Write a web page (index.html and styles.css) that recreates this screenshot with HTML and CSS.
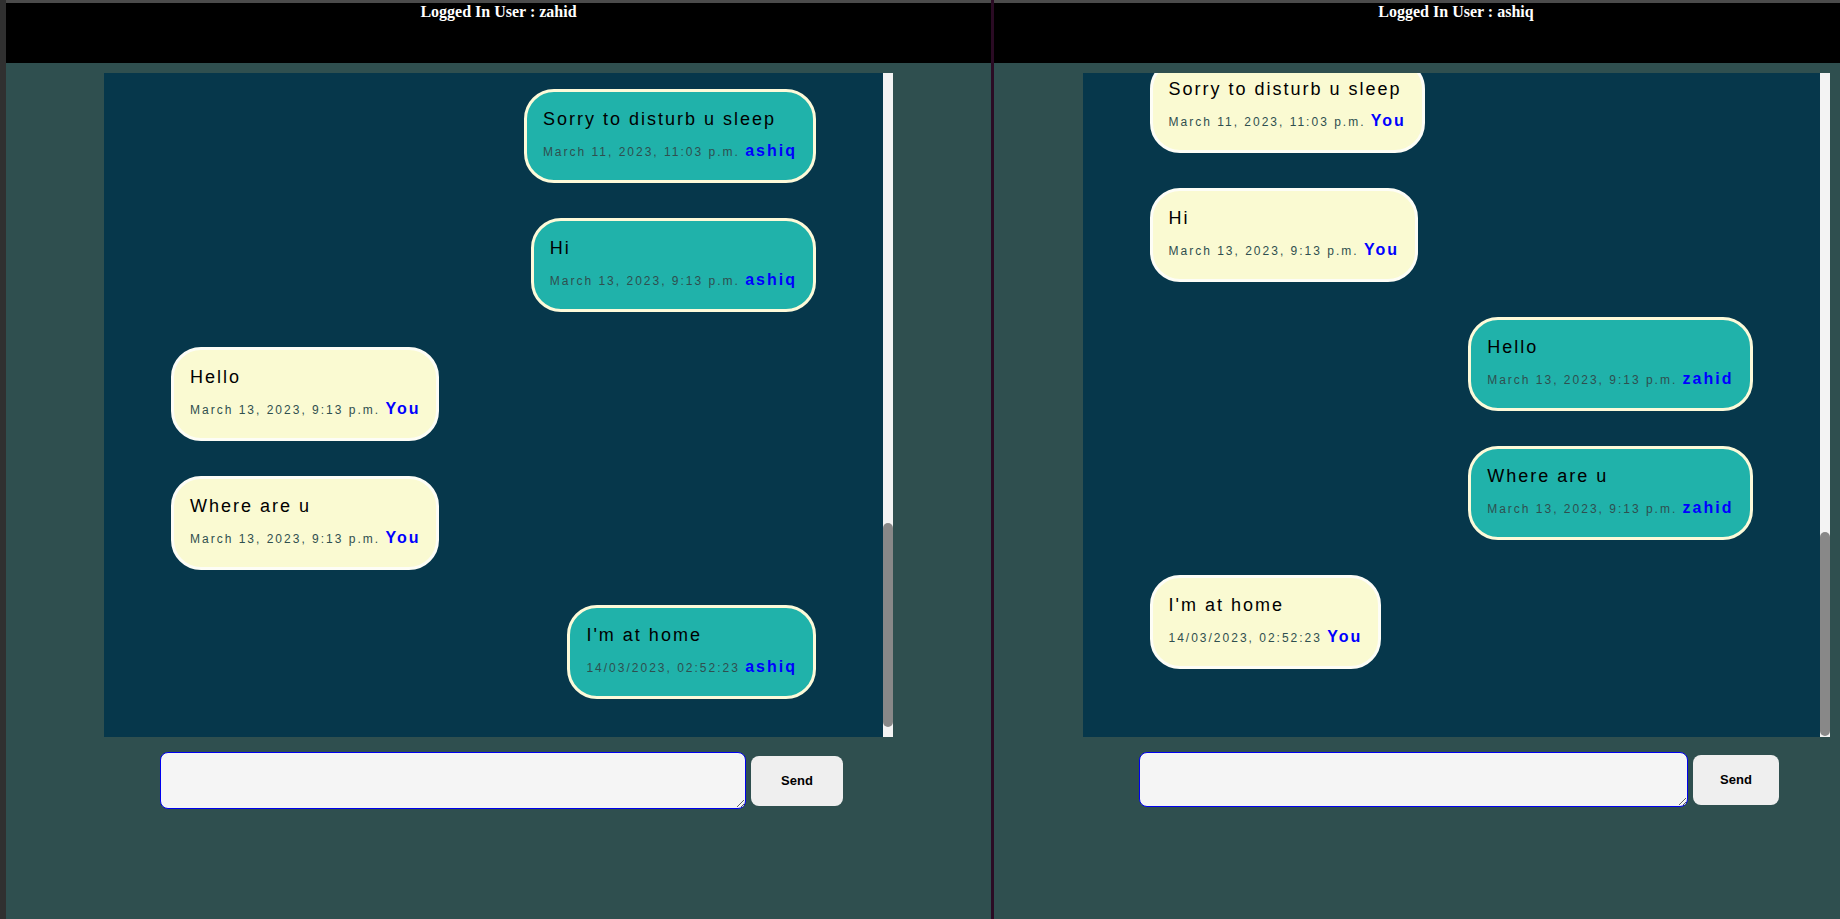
FILE: index.html
```html
<!DOCTYPE html>
<html lang="en">
<head>
<meta charset="utf-8">
<title>Chat</title>
<link rel="stylesheet" href="styles.css">
</head>
<body>
<div class="screen">
  <div class="edge"></div>

  <section class="pane pane--zahid">
    <header class="topbar"><h4 class="topbar__title">Logged In User : zahid</h4></header>
    <div class="chat">
      <div class="chat__scroll" data-offset="32">
        <div class="thread">
          <div class="msg msg--end"><div class="bubble bubble--teal"><p class="bubble__text">Sorry to disturb u sleep</p><div class="bubble__meta"><span class="bubble__date">March 11, 2023, 11:03 p.m.</span> <span class="bubble__user">ashiq</span></div></div></div>
          <div class="msg msg--end"><div class="bubble bubble--teal"><p class="bubble__text">Hi</p><div class="bubble__meta"><span class="bubble__date">March 13, 2023, 9:13 p.m.</span> <span class="bubble__user">ashiq</span></div></div></div>
          <div class="msg msg--start"><div class="bubble bubble--cream"><p class="bubble__text">Hello</p><div class="bubble__meta"><span class="bubble__date">March 13, 2023, 9:13 p.m.</span> <span class="bubble__user">You</span></div></div></div>
          <div class="msg msg--start"><div class="bubble bubble--cream"><p class="bubble__text">Where are u</p><div class="bubble__meta"><span class="bubble__date">March 13, 2023, 9:13 p.m.</span> <span class="bubble__user">You</span></div></div></div>
          <div class="msg msg--end"><div class="bubble bubble--teal"><p class="bubble__text">I'm at home</p><div class="bubble__meta"><span class="bubble__date">14/03/2023, 02:52:23</span> <span class="bubble__user">ashiq</span></div></div></div>
        </div>
      </div>
      <div class="chat__bar"><div class="chat__thumb"></div></div>
    </div>
    <form class="composer">
      <textarea class="composer__input"></textarea>
      <button type="button" class="composer__send">Send</button>
    </form>
  </section>

  <div class="divider"></div>

  <section class="pane pane--ashiq">
    <header class="topbar"><h4 class="topbar__title">Logged In User : ashiq</h4></header>
    <div class="chat">
      <div class="chat__scroll" data-offset="2">
        <div class="thread">
          <div class="msg msg--start"><div class="bubble bubble--cream"><p class="bubble__text">Sorry to disturb u sleep</p><div class="bubble__meta"><span class="bubble__date">March 11, 2023, 11:03 p.m.</span> <span class="bubble__user">You</span></div></div></div>
          <div class="msg msg--start"><div class="bubble bubble--cream"><p class="bubble__text">Hi</p><div class="bubble__meta"><span class="bubble__date">March 13, 2023, 9:13 p.m.</span> <span class="bubble__user">You</span></div></div></div>
          <div class="msg msg--end"><div class="bubble bubble--teal"><p class="bubble__text">Hello</p><div class="bubble__meta"><span class="bubble__date">March 13, 2023, 9:13 p.m.</span> <span class="bubble__user">zahid</span></div></div></div>
          <div class="msg msg--end"><div class="bubble bubble--teal"><p class="bubble__text">Where are u</p><div class="bubble__meta"><span class="bubble__date">March 13, 2023, 9:13 p.m.</span> <span class="bubble__user">zahid</span></div></div></div>
          <div class="msg msg--start"><div class="bubble bubble--cream"><p class="bubble__text">I'm at home</p><div class="bubble__meta"><span class="bubble__date">14/03/2023, 02:52:23</span> <span class="bubble__user">You</span></div></div></div>
        </div>
      </div>
      <div class="chat__bar"><div class="chat__thumb"></div></div>
    </div>
    <form class="composer">
      <textarea class="composer__input"></textarea>
      <button type="button" class="composer__send">Send</button>
    </form>
  </section>
</div>
<script src="script.js"></script>
</body>
</html>
```

FILE: styles.css
```css
html, body {
  margin: 0;
  padding: 0;
  height: 100%;
  overflow: hidden;
  background: #2f4f4f;
  font-family: "Liberation Sans", Arial, sans-serif;
}

.screen {
  display: flex;
  height: 919px;
  width: max-content;
}

.edge {
  width: 6px;
  flex: none;
  background: #303030;
}

.divider {
  width: 3px;
  flex: none;
  background: #2a0b24;
}

.pane {
  flex: none;
  display: flex;
  flex-direction: column;
  background: #2f4f4f;
  border-top: 3px solid #4b4b4b;
}

.pane--zahid { width: 985px; }
.pane--ashiq { width: 924px; }

.topbar {
  height: 60px;
  flex: none;
  background: #000;
}

.topbar__title {
  margin: 0;
  text-align: center;
  color: #fff;
  font-family: "Liberation Serif", "Times New Roman", serif;
  font-weight: bold;
  font-size: 16px;
  line-height: 16px;
  padding-top: 1px;
}

.chat {
  margin: 10px auto 0;
  height: 664px;
  flex: none;
  display: flex;
  background: #06374b;
}

.pane--zahid .chat { width: 789px; }
.pane--ashiq .chat { width: 747px; }

.chat__scroll {
  flex: 1;
  min-width: 0;
  overflow-y: hidden;
  scrollbar-width: none;
}

.chat__bar {
  width: 10px;
  flex: none;
  background: #f3f3f3;
}

.chat__thumb {
  width: 10px;
  background: #888;
  border-radius: 5px;
}

.thread {
  display: flex;
  flex-direction: column;
  padding: 1481px 67px 35px;
}

.msg {
  display: flex;
  margin-bottom: 35px;
}

.msg--start { justify-content: flex-start; }
.msg--end { justify-content: flex-end; }

.bubble {
  border: 3px solid;
  border-radius: 30px;
  padding: 16px 16px 18px;
  letter-spacing: 2px;
  white-space: nowrap;
}

.bubble--teal {
  background: #20b2aa;
  border-color: #fdfad9;
}

.bubble--cream {
  background: #fafad2;
  border-color: #fdfdf6;
}

.bubble__text {
  margin: 0 0 11px;
  font-size: 18px;
  line-height: 22px;
  color: #000;
}

.bubble__meta {
  font-size: 12px;
  line-height: 20px;
}

.bubble__date {
  color: #2f4f4f;
  font-size: 12px;
}

.bubble__user {
  color: #0000ff;
  font-weight: bold;
  font-size: 16px;
}

.composer {
  margin: 15px 0 0;
  padding-left: 6px;
  display: flex;
  justify-content: center;
  align-items: center;
  gap: 5px;
}

.composer__input {
  box-sizing: border-box;
  background: #f5f5f5;
  border: 1px solid #0000ee;
  border-radius: 8px;
  margin: 0;
  padding: 4px;
  font-family: "Liberation Mono", monospace;
}

.pane--zahid .composer__input { width: 586px; height: 57px; }
.pane--ashiq .composer__input { width: 549px; height: 55px; }

.composer__send {
  box-sizing: border-box;
  height: 50px;
  margin: 0;
  border: none;
  border-radius: 8px;
  background: #efefef;
  color: #000;
  font-family: "Liberation Sans", Arial, sans-serif;
  font-weight: bold;
  font-size: 13px;
}

.pane--zahid .composer__send { width: 92px; }
.pane--ashiq .composer__send { width: 86px; }
```

FILE: script.js
```js
document.querySelectorAll('.chat').forEach(function (chat) {
  var scroller = chat.querySelector('.chat__scroll');
  var bar = chat.querySelector('.chat__bar');
  var thumb = chat.querySelector('.chat__thumb');
  var offset = Number(scroller.dataset.offset || 0);
  var total = scroller.scrollHeight;
  var visible = scroller.clientHeight;
  scroller.scrollTop = total - visible - offset;
  var track = bar.clientHeight;
  thumb.style.height = Math.round(track * visible / total) + 'px';
  thumb.style.marginTop = Math.round(track * scroller.scrollTop / total) + 'px';
});
```
